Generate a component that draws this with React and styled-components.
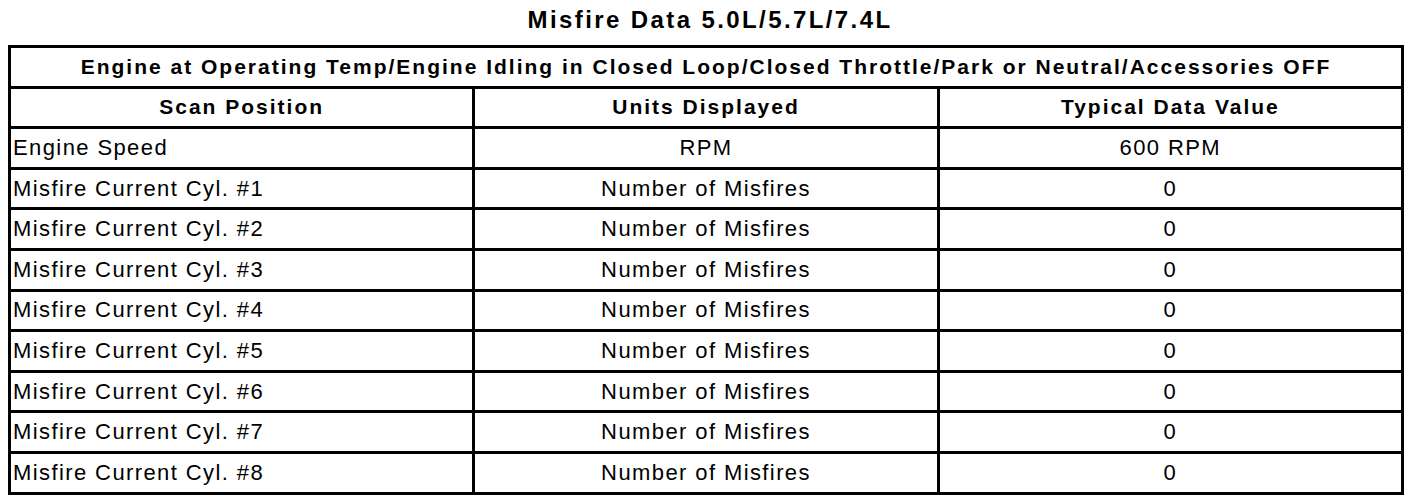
import React from "react";
import styled, { createGlobalStyle } from "styled-components";

const GlobalStyle = createGlobalStyle`
  html, body {
    margin: 0;
    padding: 0;
    background: #fff;
  }
  body {
    font-family: "Liberation Sans", Arial, sans-serif;
    color: #000;
  }
`;

const Page = styled.div`
  padding: 8px 20px 0 8px;
`;

const Title = styled.h1`
  margin: 0 0 13px;
  font-size: 24px;
  line-height: 24px;
  font-weight: bold;
  letter-spacing: 2.4px;
  text-align: center;
  padding-left: 8px;
`;

const Table = styled.table`
  width: 1396px;
  border-collapse: collapse;
  border: 3px solid #000;
  table-layout: fixed;
`;

const Row = styled.tr`
  height: 40.6px;
`;

const HeadCell = styled.th`
  border: 3px solid #000;
  padding: 0;
  font-size: 21px;
  font-weight: bold;
  letter-spacing: 2px;
  text-align: center;
  vertical-align: middle;
  white-space: nowrap;
`;

const Cell = styled.td`
  border: 3px solid #000;
  padding: ${(p) => (p.$left ? "0 0 0 2px" : "0")};
  font-size: 22px;
  letter-spacing: 1.4px;
  text-align: ${(p) => (p.$left ? "left" : "center")};
  vertical-align: middle;
  white-space: nowrap;
`;

const rows = [
  ["Engine Speed", "RPM", "600 RPM"],
  ...[1, 2, 3, 4, 5, 6, 7, 8].map((n) => [
    `Misfire Current Cyl. #${n}`,
    "Number of Misfires",
    "0",
  ]),
];

export default function App() {
  return (
    <Page>
      <GlobalStyle />
      <Title>Misfire Data 5.0L/5.7L/7.4L</Title>
      <Table>
        <thead>
          <Row>
            <HeadCell colSpan={3}>
              Engine at Operating Temp/Engine Idling in Closed Loop/Closed
              Throttle/Park or Neutral/Accessories OFF
            </HeadCell>
          </Row>
          <Row>
            <HeadCell>Scan Position</HeadCell>
            <HeadCell>Units Displayed</HeadCell>
            <HeadCell>Typical Data Value</HeadCell>
          </Row>
        </thead>
        <tbody>
          {rows.map(([pos, units, value]) => (
            <Row key={pos}>
              <Cell $left>{pos}</Cell>
              <Cell>{units}</Cell>
              <Cell>{value}</Cell>
            </Row>
          ))}
        </tbody>
      </Table>
    </Page>
  );
}
